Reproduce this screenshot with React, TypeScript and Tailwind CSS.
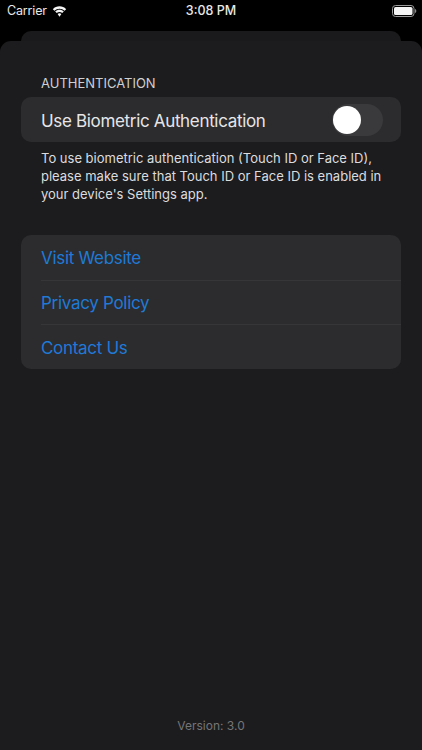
import React from 'react';

const links = ['Visit Website', 'Privacy Policy', 'Contact Us'];

const App: React.FC = () => {
  return (
    <div className="w-[422px] h-[750px] bg-black flex flex-col overflow-hidden font-['Inter','Liberation_Sans',sans-serif]">
      {/* Status bar */}
      <div className="h-[31px] relative text-[#e8e8e8]">
        <div className="flex items-center h-[22px] pl-[7px] pr-[5px] justify-between">
          <div className="flex items-center gap-[5px]">
            <span className="text-[12.5px] leading-none tracking-[-0.15px]">Carrier</span>
            <svg width="15" height="11" viewBox="0 0 16 11" fill="#f5f5f5">
              <path d="M8 2.600c2.100 0 4 .8 5.400 2.200l1.700-1.800C13.200 1.100 10.700 0 8 0S2.800 1.100.9 3l1.700 1.800C4 3.400 5.900 2.600 8 2.600z" />
              <path d="M8 6.100c1.100 0 2.100.4 2.900 1.100l1.700-1.800C11.400 4.300 9.800 3.600 8 3.600S4.600 4.300 3.400 5.400l1.700 1.800C5.900 6.500 6.900 6.100 8 6.100z" />
              <path d="M8 7.400c-.8 0-1.500.3-2 .8L8 11l2-2.800c-.5-.5-1.200-.8-2-.8z" />
            </svg>
          </div>
          <svg width="25" height="12" viewBox="0 0 25 12">
            <rect x="0.5" y="0.5" width="21.500" height="11" rx="3" fill="none" stroke="#9a9a9a" />
            <rect x="2" y="2" width="18.500" height="8" rx="1.600" fill="#f5f5f5" />
            <path d="M23 4v4c.8-.3 1.300-1.100 1.300-2S23.800 4.300 23 4z" fill="#8a8a8a" />
          </svg>
        </div>
        <span className="absolute left-0 right-0 top-[4px] text-center text-[12.5px] leading-[14px] font-medium">3:08 PM</span>
      </div>

      <div className="h-[10px] mx-[21px] bg-[#1a1a1c] rounded-t-[10px]" />

      {/* Sheet */}
      <div className="flex-1 bg-[#1c1c1e] rounded-t-[11px] flex flex-col px-[21px]">
        <div className="mt-[35px] pl-[20px] text-[13px] leading-[14px] text-[#d0d0d2]">AUTHENTICATION</div>

        <div className="mt-[7px] h-[45px] bg-[#2c2c2e] rounded-[10px] flex items-center justify-between pl-[20px] pr-[18px]">
          <span className="text-[17px] leading-[24px] tracking-[-0.33px] text-[#e6e6e8] pt-[3px]">Use Biometric Authentication</span>
          <div className="w-[51px] h-[32px] rounded-full bg-[#3a3a3c] p-[2px]">
            <div className="w-[28px] h-[28px] rounded-full bg-white -ml-[1px]" />
          </div>
        </div>

        <p className="mt-[7px] pl-[20px] pr-[16px] text-[13px] leading-[18px] text-[#dcdcde]">
          To use biometric authentication (Touch ID or Face ID), please make sure that Touch ID or Face ID is enabled in your device's Settings app.
        </p>

        <div className="mt-[32px] bg-[#2c2c2e] rounded-[10px] pl-[20px]">
          {links.map((link, i) => (
            <div key={link} className={`h-[44.7px] flex items-center text-[17px] tracking-[-0.3px] text-[#1f7ad6] pt-[3px] ${i > 0 ? 'border-t border-[#363638]' : ''}`}>
              {link}
            </div>
          ))}
        </div>

        <div className="mt-auto pb-[16px] text-center text-[12px] leading-[16px] text-[#757577]">Version: 3.0</div>
      </div>
    </div>
  );
};

export default App;
